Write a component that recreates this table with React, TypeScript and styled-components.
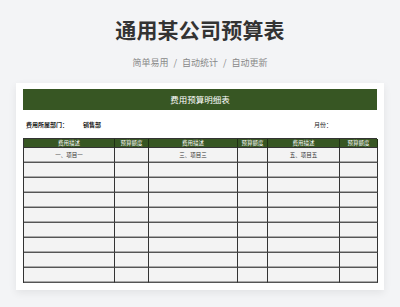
import styled, { createGlobalStyle } from 'styled-components';

const GlobalStyle = createGlobalStyle`
  html, body {
    margin: 0;
    padding: 0;
    background: #f3f4f6;
    font-family: "Noto Sans CJK SC", "Noto Sans", sans-serif;
  }
`;

const columns = [
  { title: '费用描述', item: '一、项目一' },
  { title: '预算额度', item: '' },
  { title: '费用描述', item: '三、项目三' },
  { title: '预算额度', item: '' },
  { title: '费用描述', item: '五、项目五' },
  { title: '预算额度', item: '' },
];

const tags = ['简单易用', '自动统计', '自动更新'];

const ROWS = 9;

export default function App() {
  return (
    <>
      <GlobalStyle />
      <Page>
        <Title>通用某公司预算表</Title>
        <Subtitle>
          {tags.map((t, i) => (
            <span key={t}>
              {i > 0 && <Slash>/</Slash>}
              {t}
            </span>
          ))}
        </Subtitle>
        <Card>
          <SheetTitle>费用预算明细表</SheetTitle>
          <InfoRow>
            <InfoLabel>费用所属部门：</InfoLabel>
            <InfoValue>销售部</InfoValue>
            <MonthLabel>月份：</MonthLabel>
          </InfoRow>
          <Table>
            {columns.map((c, i) => (
              <HeadCell key={'h' + i}>{c.title}</HeadCell>
            ))}
            {Array.from({ length: ROWS }).map((_, r) =>
              columns.map((c, i) => (
                <Cell key={r + '-' + i}>{r === 0 ? c.item : ''}</Cell>
              ))
            )}
          </Table>
        </Card>
      </Page>
    </>
  );
}

const Page = styled.div`
  width: 400px;
  height: 307px;
  overflow: hidden;
  display: flex;
  flex-direction: column;
  align-items: center;
`;

const Title = styled.h1`
  margin: 17px 0 0;
  font-size: 21px;
  line-height: 24px;
  font-weight: 700;
  color: #333;
  letter-spacing: 0.2px;
`;

const Subtitle = styled.div`
  margin-top: 15px;
  font-size: 9px;
  line-height: 13px;
  color: #888;
`;

const Slash = styled.span`
  margin: 0 5px;
`;

const Card = styled.div`
  margin-top: 14px;
  width: 368px;
  box-sizing: border-box;
  background: #fff;
  padding: 6px 7px 7px;
  box-shadow: 0 3px 8px rgba(0, 0, 0, 0.07);
`;

const SheetTitle = styled.div`
  height: 21px;
  background: #375623;
  color: #fff;
  font-family: "Noto Sans CJK SC", serif;
  font-size: 8.5px;
  line-height: 21px;
  text-align: center;
`;

const InfoRow = styled.div`
  display: flex;
  align-items: center;
  height: 28px;
  padding-left: 3px;
  font-size: 6px;
  font-weight: 700;
  color: #222;
`;

const InfoLabel = styled.span`
  width: 57px;
`;

const InfoValue = styled.span`
  flex: 1;
`;

const MonthLabel = styled.span`
  width: 63px;
  font-weight: 400;
`;

const Table = styled.div`
  display: grid;
  grid-template-columns: 91px 34px 89px 30px 72px 38px;
  grid-template-rows: 9px;
  grid-auto-rows: 15px;
  border-left: 1px solid #333;
  border-top: 1px solid #333;
`;

const HeadCell = styled.div`
  background: #375623;
  color: #fff;
  font-size: 5.5px;
  line-height: 8px;
  text-align: center;
  border-right: 1px solid #1f2f14;
  border-bottom: 1px solid #333;
`;

const Cell = styled.div`
  background: #f3f3f3;
  color: #333;
  font-size: 5.5px;
  line-height: 14px;
  text-align: center;
  border-right: 1px solid #333;
  border-bottom: 1px solid #555;
  box-shadow: inset 0 -1px 0 #aaa;
`;
